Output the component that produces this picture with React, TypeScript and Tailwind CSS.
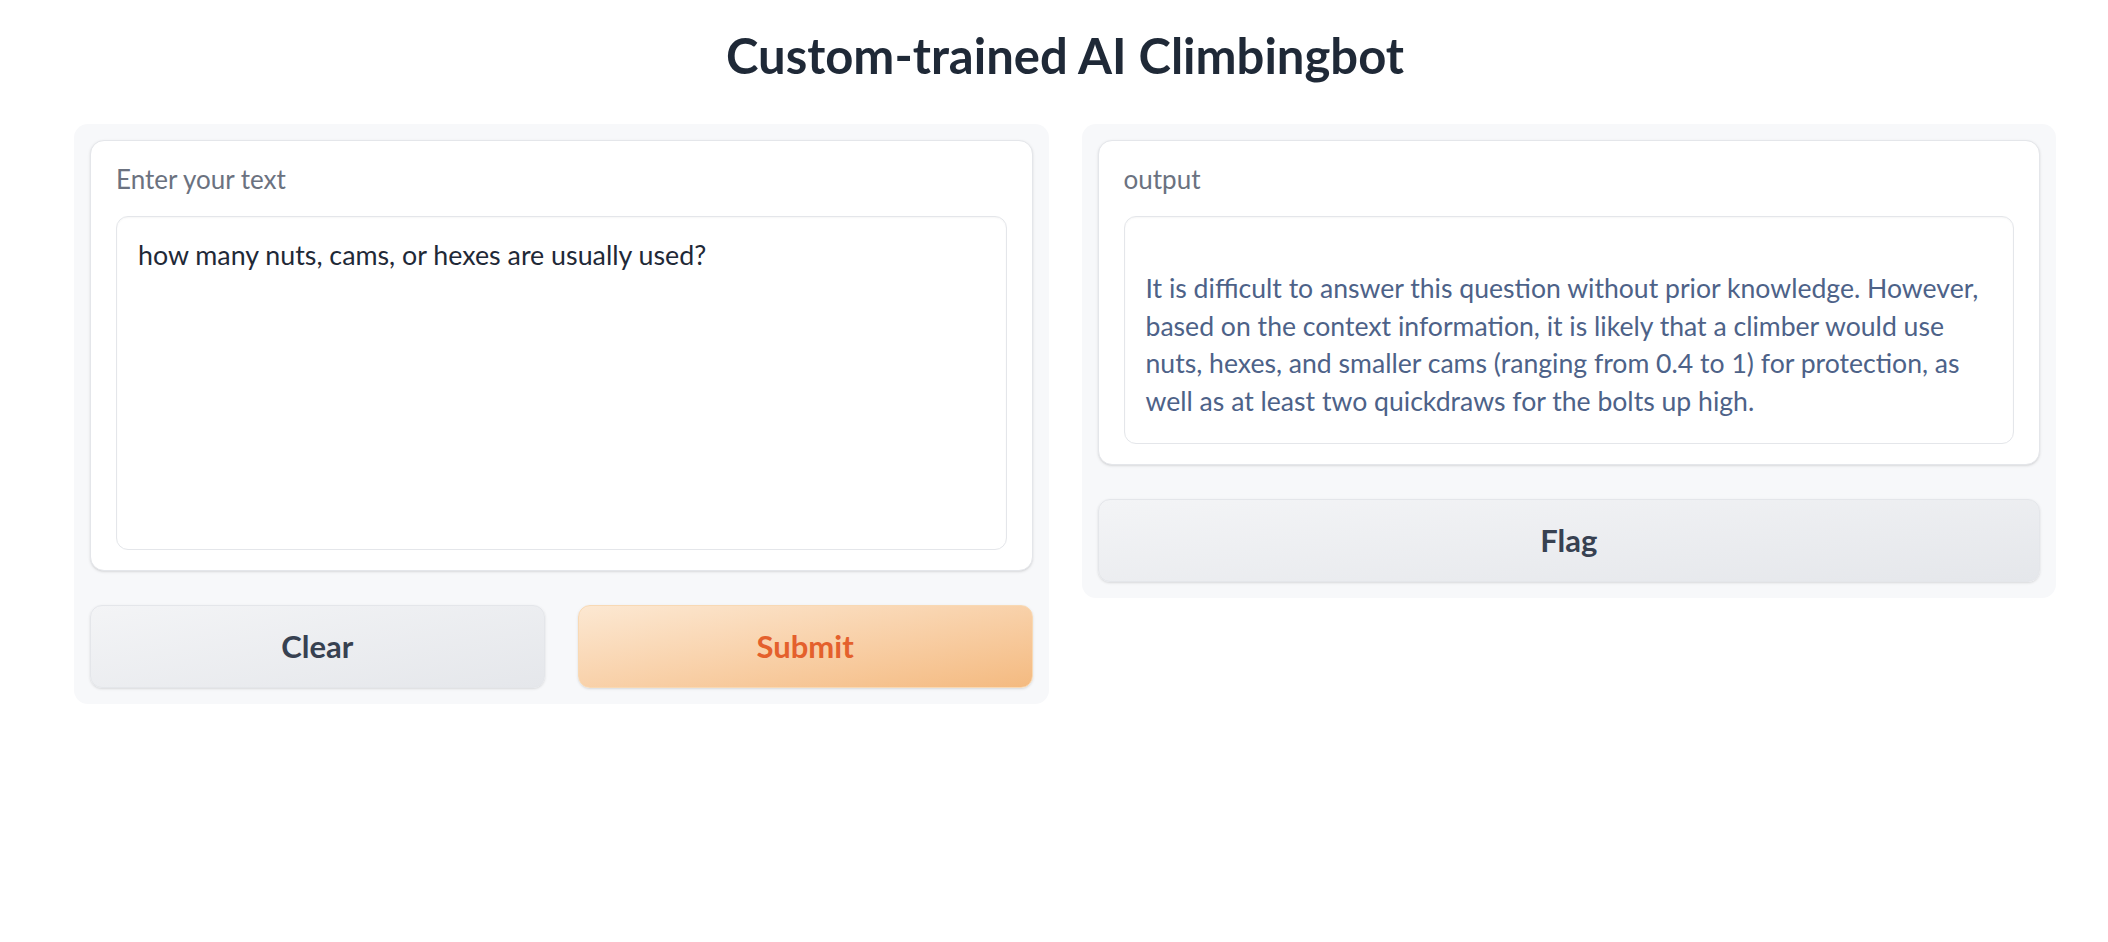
const font = { fontFamily: "Lato, 'Noto Sans', sans-serif" };

const answerLines = [
  "It is difficult to answer this question without prior knowledge. However,",
  "based on the context information, it is likely that a climber would use",
  "nuts, hexes, and smaller cams (ranging from 0.4 to 1) for protection, as",
  "well as at least two quickdraws for the bolts up high.",
];

export default function App() {
  return (
    <div className="min-h-screen w-full bg-white pl-[74px] pr-[52px]" style={font}>
      <h1 className="pt-[26px] text-center text-[49px] font-bold leading-[1.2] text-[#1f2937]">
        Custom-trained AI Climbingbot
      </h1>

      <div className="mt-[39px] flex items-start gap-[33px]">
        {/* Input column */}
        <div className="flex-1 rounded-[14px] bg-[#f7f8fa] p-4">
          <div className="rounded-[14px] border border-[#e4e6ea] bg-white px-[25px] pb-[20px] pt-[23px] shadow-sm">
            <div className="text-[26px] leading-[1.2] text-[#6b7280]">Enter your text</div>
            <div className="mt-[21px] h-[334px] rounded-[12px] border border-[#e4e6ea] px-[21px] pt-[20px] text-[26.8px] leading-[1.4] text-[#1f2937] shadow-[inset_0_1px_2px_rgba(0,0,0,0.04)]">
              how many nuts, cams, or hexes are usually used?
            </div>
          </div>

          <div className="mt-[34px] flex gap-[33px]">
            <button className="h-[83px] flex-1 rounded-[12px] border border-[#e4e6ea] bg-gradient-to-br from-[#f3f4f6] to-[#e5e7eb] text-[31px] font-bold text-[#374151] shadow-sm">
              Clear
            </button>
            <button className="h-[83px] flex-1 rounded-[12px] border border-[#f8d9b4] bg-gradient-to-br from-[#fce8d2] to-[#f4ba80] text-[31px] font-bold text-[#e4602c] shadow-sm">
              Submit
            </button>
          </div>
        </div>

        {/* Output column */}
        <div className="flex-1 rounded-[14px] bg-[#f7f8fa] p-4">
          <div className="rounded-[14px] border border-[#e4e6ea] bg-white px-[25px] pb-[20px] pt-[23px] shadow-sm">
            <div className="text-[26px] leading-[1.2] text-[#6b7280]">output</div>
            <div className="mt-[21px] rounded-[12px] border border-[#e4e6ea] px-[21px] pb-[22px] pt-[53px] text-[26.6px] leading-[37.7px] text-[#4d6288] shadow-[inset_0_1px_2px_rgba(0,0,0,0.04)]">
              {answerLines.map((line) => (
                <div key={line} className="whitespace-nowrap">
                  {line}
                </div>
              ))}
            </div>
          </div>

          <button className="mt-[34px] h-[83px] w-full rounded-[12px] border border-[#e4e6ea] bg-gradient-to-br from-[#f3f4f6] to-[#e5e7eb] text-[31px] font-bold text-[#374151] shadow-sm">
            Flag
          </button>
        </div>
      </div>
    </div>
  );
}
